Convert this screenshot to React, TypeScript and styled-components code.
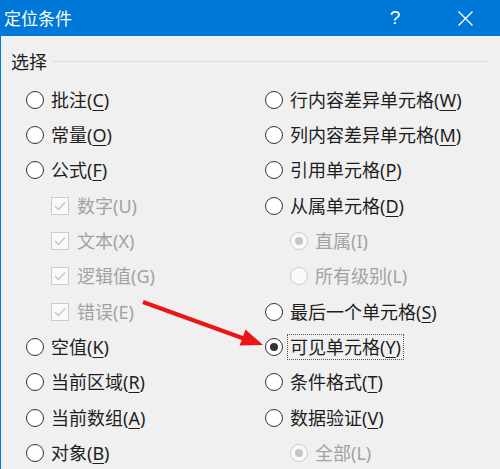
import React from 'react';
import styled, { createGlobalStyle } from 'styled-components';

const GlobalStyle = createGlobalStyle`
  html, body {
    margin: 0;
    padding: 0;
    background: #f0f0f0;
  }
  body {
    font-family: "Noto Sans", "Noto Sans CJK SC", sans-serif;
  }
`;

const Window = styled.div`
  position: relative;
  width: 500px;
  height: 469px;
  display: flex;
  flex-direction: column;
  overflow: hidden;
`;

const TitleBar = styled.div`
  height: 36px;
  background: #0078d7;
  color: #fff;
  display: flex;
  align-items: center;
  padding-left: 4px;
`;

const Title = styled.div`
  flex: 1;
  font-family: "Noto Sans CJK SC", sans-serif;
  font-size: 17px;
  line-height: 22px;
`;

const TitleButton = styled.div`
  width: 70px;
  height: 36px;
  display: flex;
  align-items: center;
  justify-content: center;
  font-family: "Liberation Sans", sans-serif;
  font-size: 19px;
  font-weight: 300;
`;

const Body = styled.div`
  flex: 1;
  background: #f0f0f0;
  border-left: 1px solid #0078d7;
`;

const GroupHeader = styled.div`
  display: flex;
  align-items: center;
  gap: 6px;
  height: 24px;
  margin-top: 13px;
  padding-left: 10px;
  padding-right: 11px;
  font-family: "Noto Sans CJK SC", sans-serif;
  font-size: 18px;
  color: #1e1e1e;

  &::after {
    content: '';
    flex: 1;
    height: 1px;
    background: #dcdcdc;
  }
`;

const Columns = styled.div`
  display: grid;
  grid-template-columns: 239px 1fr;
  padding-left: 25px;
  margin-top: 9px;
`;

const Column = styled.div`
  display: flex;
  flex-direction: column;
`;

const Item = styled.div<{ $indent?: boolean }>`
  height: 35.33px;
  display: flex;
  align-items: center;
  gap: 7px;
  padding-left: ${(p) => (p.$indent ? '25px' : '0')};
`;

const Radio = styled.span<{ $checked?: boolean; $disabled?: boolean }>`
  width: 16px;
  height: 16px;
  border-radius: 50%;
  border: 1px solid ${(p) => (p.$disabled ? '#cccccc' : '#333333')};
  background: ${(p) => (p.$disabled ? '#fafafa' : '#ffffff')};
  display: flex;
  align-items: center;
  justify-content: center;
  flex-shrink: 0;

  &::after {
    content: '';
    display: ${(p) => (p.$checked ? 'block' : 'none')};
    width: 8px;
    height: 8px;
    border-radius: 50%;
    background: ${(p) => (p.$disabled ? '#c6c6c6' : '#333333')};
  }
`;

const CheckBox = styled.span`
  width: 16px;
  height: 16px;
  border: 1px solid #cccccc;
  background: #fafafa;
  display: flex;
  align-items: center;
  justify-content: center;
  flex-shrink: 0;
  margin-right: 1px;
`;

const Label = styled.span<{ $disabled?: boolean; $focused?: boolean }>`
  font-family: "Noto Sans", "Noto Sans CJK SC", sans-serif;
  font-size: 18px;
  line-height: 24px;
  color: ${(p) => (p.$disabled ? '#a2a2a2' : '#1e1e1e')};
  white-space: nowrap;
  border: 1px dotted ${(p) => (p.$focused ? '#555' : 'transparent')};
  padding: 0 2px;
  margin-left: -3px;

  u {
    text-underline-offset: 3px;
    text-decoration-thickness: 1px;
  }
`;

const ArrowLayer = styled.svg`
  position: absolute;
  left: 0;
  top: 0;
  pointer-events: none;
`;

type Entry = {
  text: string;
  key: string;
  kind: 'radio' | 'check' | 'sub';
  checked?: boolean;
  disabled?: boolean;
  focused?: boolean;
};

const leftItems: Entry[] = [
  { text: '批注', key: 'C', kind: 'radio' },
  { text: '常量', key: 'O', kind: 'radio' },
  { text: '公式', key: 'F', kind: 'radio' },
  { text: '数字', key: 'U', kind: 'check', checked: true, disabled: true },
  { text: '文本', key: 'X', kind: 'check', checked: true, disabled: true },
  { text: '逻辑值', key: 'G', kind: 'check', checked: true, disabled: true },
  { text: '错误', key: 'E', kind: 'check', checked: true, disabled: true },
  { text: '空值', key: 'K', kind: 'radio' },
  { text: '当前区域', key: 'R', kind: 'radio' },
  { text: '当前数组', key: 'A', kind: 'radio' },
  { text: '对象', key: 'B', kind: 'radio' },
];

const rightItems: Entry[] = [
  { text: '行内容差异单元格', key: 'W', kind: 'radio' },
  { text: '列内容差异单元格', key: 'M', kind: 'radio' },
  { text: '引用单元格', key: 'P', kind: 'radio' },
  { text: '从属单元格', key: 'D', kind: 'radio' },
  { text: '直属', key: 'I', kind: 'sub', checked: true, disabled: true },
  { text: '所有级别', key: 'L', kind: 'sub', disabled: true },
  { text: '最后一个单元格', key: 'S', kind: 'radio' },
  { text: '可见单元格', key: 'Y', kind: 'radio', checked: true, focused: true },
  { text: '条件格式', key: 'T', kind: 'radio' },
  { text: '数据验证', key: 'V', kind: 'radio' },
  { text: '全部', key: 'L', kind: 'sub', checked: true, disabled: true },
];

const Option: React.FC<{ item: Entry }> = ({ item }) => (
  <Item $indent={item.kind !== 'radio'}>
    {item.kind === 'check' ? (
      <CheckBox>
        <svg width="12" height="10" viewBox="0 0 12 10">
          <polyline points="1,5 4.5,8.5 11,1.5" fill="none" stroke="#c4c4c4" strokeWidth="1.3" />
        </svg>
      </CheckBox>
    ) : (
      <Radio $checked={item.checked} $disabled={item.disabled} />
    )}
    <Label $disabled={item.disabled} $focused={item.focused}>
      {item.text}(
      {item.disabled ? item.key : <u>{item.key}</u>})
    </Label>
  </Item>
);

const App: React.FC = () => {
  return (
    <Window>
      <GlobalStyle />
      <TitleBar>
        <Title>定位条件</Title>
        <TitleButton>?</TitleButton>
        <TitleButton>
          <svg width="15" height="15" viewBox="0 0 15 15">
            <path d="M0.5 0.5 L14.5 14.5 M14.5 0.5 L0.5 14.5" stroke="#fff" strokeWidth="1.3" />
          </svg>
        </TitleButton>
      </TitleBar>
      <Body>
        <GroupHeader>选择</GroupHeader>
        <Columns>
          <Column>
            {leftItems.map((it) => (
              <Option key={it.text} item={it} />
            ))}
          </Column>
          <Column>
            {rightItems.map((it) => (
              <Option key={it.text} item={it} />
            ))}
          </Column>
        </Columns>
      </Body>
      <ArrowLayer width="500" height="469" viewBox="0 0 500 469">
        <line x1="143" y1="302" x2="245" y2="339" stroke="#ec1515" strokeWidth="4" />
        <polygon points="263,345 239.6,345.6 245.5,329.6" fill="#ec1515" />
      </ArrowLayer>
    </Window>
  );
};

export default App;
